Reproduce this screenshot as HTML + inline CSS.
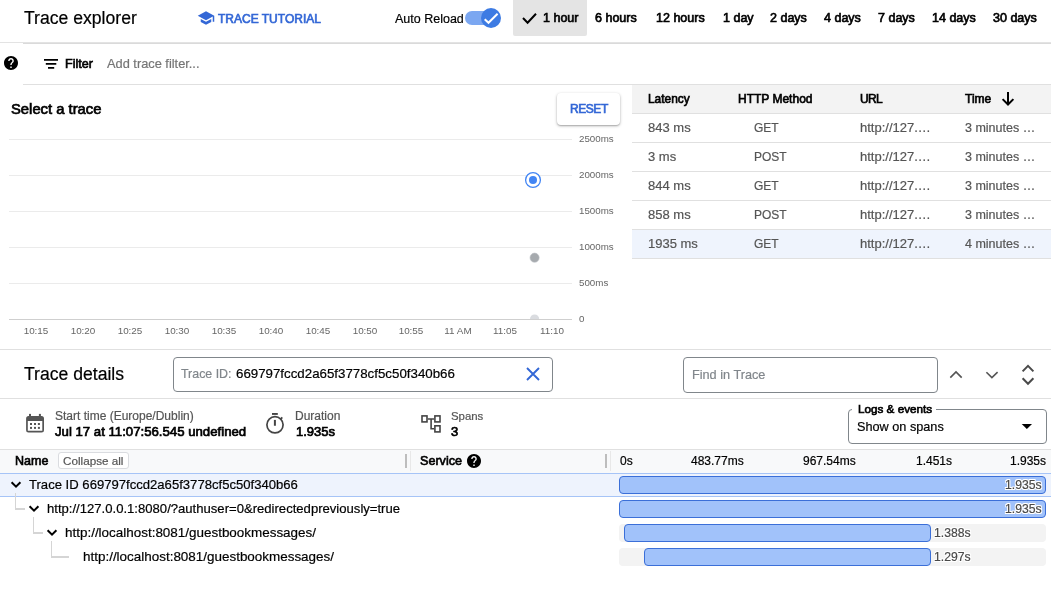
<!DOCTYPE html>
<html><head><meta charset="utf-8"><style>
html,body{margin:0;padding:0;background:#fff;width:1051px;height:611px;overflow:hidden;position:relative;font-family:"Liberation Sans", sans-serif;}
.t{position:absolute;white-space:pre;font-family:"Liberation Sans", sans-serif;will-change:transform;}
.r{position:absolute;}
</style></head><body>
<div class="t" style="left:23.60px;top:10.00px;font-size:17.6px;line-height:17.6px;color:#000;-webkit-text-stroke:0.2px #000;">Trace explorer</div>
<svg class="r" style="left:197.25px;top:8.65px" width="18" height="18" viewBox="0 0 24 24"><path fill="#3367d6" d="M5 13.18v4L12 21l7-3.82v-4L12 17l-7-3.82zM12 3L1 9l11 6 9-4.91V17h2V9L12 3z"/></svg>
<div class="t" style="left:218.00px;top:13.00px;font-size:12px;line-height:12px;color:#3367d6;-webkit-text-stroke:0.6499999999999999px #3367d6;">TRACE TUTORIAL</div>
<div class="t" style="left:394.90px;top:13.00px;font-size:12.5px;line-height:12.5px;color:#000;-webkit-text-stroke:0.2px #000;">Auto Reload</div>
<div class="r" style="left:465px;top:11px;width:33px;height:14px;border-radius:7px;background:#7ba7f1;"></div>
<svg class="r" style="left:480px;top:7px" width="22" height="22" viewBox="0 0 22 22"><circle cx="11" cy="11" r="10" fill="#3d7be3"/><path d="M4.7 12.2 L8.5 15.8 L17.6 6.75" stroke="#fff" stroke-width="2" fill="none"/></svg>
<div class="r" style="left:513px;top:0px;width:74px;height:35.5px;background:#e4e4e4;border-radius:0 0 2px 2px;"></div>
<svg class="r" style="left:520px;top:8px" width="20" height="20" viewBox="0 0 20 20"><path d="M3 10 L7.6 14.7 L16 5.7" stroke="#000" stroke-width="2" fill="none"/></svg>
<div class="t" style="left:543.00px;top:12.00px;font-size:12.5px;line-height:12.5px;color:#000;-webkit-text-stroke:0.6499999999999999px #000;">1 hour</div>
<div class="t" style="left:595.00px;top:12.00px;font-size:12.5px;line-height:12.5px;color:#000;-webkit-text-stroke:0.6499999999999999px #000;">6 hours</div>
<div class="t" style="left:655.50px;top:12.00px;font-size:12.5px;line-height:12.5px;color:#000;-webkit-text-stroke:0.6499999999999999px #000;">12 hours</div>
<div class="t" style="left:723.00px;top:12.00px;font-size:12.5px;line-height:12.5px;color:#000;-webkit-text-stroke:0.6499999999999999px #000;">1 day</div>
<div class="t" style="left:770.00px;top:12.00px;font-size:12.5px;line-height:12.5px;color:#000;-webkit-text-stroke:0.6499999999999999px #000;">2 days</div>
<div class="t" style="left:824.00px;top:12.00px;font-size:12.5px;line-height:12.5px;color:#000;-webkit-text-stroke:0.6499999999999999px #000;">4 days</div>
<div class="t" style="left:877.60px;top:12.00px;font-size:12.5px;line-height:12.5px;color:#000;-webkit-text-stroke:0.6499999999999999px #000;">7 days</div>
<div class="t" style="left:932.00px;top:12.00px;font-size:12.5px;line-height:12.5px;color:#000;-webkit-text-stroke:0.6499999999999999px #000;">14 days</div>
<div class="t" style="left:993.00px;top:12.00px;font-size:12.5px;line-height:12.5px;color:#000;-webkit-text-stroke:0.6499999999999999px #000;">30 days</div>
<div class="r" style="left:0px;top:42px;width:1051px;height:1px;background:#e3e3e3;"></div>
<div class="r" style="left:23px;top:43px;width:1028px;height:1px;background:#dadada;"></div>
<svg class="r" style="left:4px;top:56px" width="14" height="14" viewBox="2 2 20 20"><path fill="#000" d="M12 2C6.48 2 2 6.48 2 12s4.48 10 10 10 10-4.48 10-10S17.52 2 12 2zm1 17h-2v-2h2v2zm2.07-7.75l-.9.92C13.45 12.9 13 13.5 13 15h-2v-.5c0-1.1.45-2.1 1.17-2.83l1.24-1.26c.37-.36.59-.86.59-1.41 0-1.1-.9-2-2-2s-2 .9-2 2H8c0-2.21 1.79-4 4-4s4 1.79 4 4c0 .88-.36 1.68-.93 2.25z"/></svg>
<svg class="r" style="left:40px;top:55px" width="22" height="18" viewBox="0 0 22 18"><g fill="#000"><rect x="4" y="4" width="14" height="1.75"/><rect x="5.8" y="8" width="10.5" height="1.75"/><rect x="8" y="12" width="6.2" height="1.75"/></g></svg>
<div class="t" style="left:64.70px;top:58.00px;font-size:12.6px;line-height:12.6px;color:#000;-webkit-text-stroke:0.6499999999999999px #000;">Filter</div>
<div class="t" style="left:107.00px;top:58.00px;font-size:12.8px;line-height:12.8px;color:#757575;-webkit-text-stroke:0.2px #757575;">Add trace filter...</div>
<div class="r" style="left:23px;top:84px;width:1028px;height:1px;background:#e0e0e0;"></div>
<div class="t" style="left:11.40px;top:102.00px;font-size:14.8px;line-height:14.8px;color:#000;-webkit-text-stroke:0.7px #000;">Select a trace</div>
<div class="r" style="left:557px;top:93px;width:63px;height:32px;background:#fff;border-radius:4px;box-shadow:0 1px 3px rgba(0,0,0,.3),0 1px 1px rgba(0,0,0,.12);"></div>
<div class="t" style="left:570.00px;top:103.00px;font-size:12px;line-height:12px;color:#3367d6;-webkit-text-stroke:0.6499999999999999px #3367d6;letter-spacing:-0.45px;">RESET</div>
<div class="r" style="left:9px;top:139px;width:563px;height:1px;background:#ebebeb;"></div>
<div class="r" style="left:9px;top:175px;width:563px;height:1px;background:#ebebeb;"></div>
<div class="r" style="left:9px;top:211px;width:563px;height:1px;background:#ebebeb;"></div>
<div class="r" style="left:9px;top:247px;width:563px;height:1px;background:#ebebeb;"></div>
<div class="r" style="left:9px;top:283px;width:563px;height:1px;background:#ebebeb;"></div>
<div class="r" style="left:9px;top:319px;width:563px;height:1px;background:#cfcfcf;"></div>
<div class="t" style="left:579.40px;top:134.00px;font-size:9.75px;line-height:9.75px;color:#666;">2500ms</div>
<div class="t" style="left:579.40px;top:170.00px;font-size:9.75px;line-height:9.75px;color:#666;">2000ms</div>
<div class="t" style="left:579.40px;top:206.00px;font-size:9.75px;line-height:9.75px;color:#666;">1500ms</div>
<div class="t" style="left:579.40px;top:242.00px;font-size:9.75px;line-height:9.75px;color:#666;">1000ms</div>
<div class="t" style="left:579.40px;top:278.00px;font-size:9.75px;line-height:9.75px;color:#666;">500ms</div>
<div class="t" style="left:579.40px;top:314.00px;font-size:9.75px;line-height:9.75px;color:#666;">0</div>
<div class="t" style="left:6.10px;top:326.00px;font-size:9.9px;line-height:9.9px;color:#666;width:60px;text-align:center;">10:15</div>
<div class="t" style="left:53.02px;top:326.00px;font-size:9.9px;line-height:9.9px;color:#666;width:60px;text-align:center;">10:20</div>
<div class="t" style="left:99.94px;top:326.00px;font-size:9.9px;line-height:9.9px;color:#666;width:60px;text-align:center;">10:25</div>
<div class="t" style="left:146.86px;top:326.00px;font-size:9.9px;line-height:9.9px;color:#666;width:60px;text-align:center;">10:30</div>
<div class="t" style="left:193.78px;top:326.00px;font-size:9.9px;line-height:9.9px;color:#666;width:60px;text-align:center;">10:35</div>
<div class="t" style="left:240.70px;top:326.00px;font-size:9.9px;line-height:9.9px;color:#666;width:60px;text-align:center;">10:40</div>
<div class="t" style="left:287.62px;top:326.00px;font-size:9.9px;line-height:9.9px;color:#666;width:60px;text-align:center;">10:45</div>
<div class="t" style="left:334.54px;top:326.00px;font-size:9.9px;line-height:9.9px;color:#666;width:60px;text-align:center;">10:50</div>
<div class="t" style="left:381.46px;top:326.00px;font-size:9.9px;line-height:9.9px;color:#666;width:60px;text-align:center;">10:55</div>
<div class="t" style="left:428.38px;top:326.00px;font-size:9.9px;line-height:9.9px;color:#666;width:60px;text-align:center;">11 AM</div>
<div class="t" style="left:475.30px;top:326.00px;font-size:9.9px;line-height:9.9px;color:#666;width:60px;text-align:center;">11:05</div>
<div class="t" style="left:522.22px;top:326.00px;font-size:9.9px;line-height:9.9px;color:#666;width:60px;text-align:center;">11:10</div>
<svg class="r" style="left:523px;top:169.6px" width="20" height="20" viewBox="0 0 20 20"><circle cx="10" cy="10" r="7.4" fill="#fff" stroke="#4285f4" stroke-width="1.3"/><circle cx="10" cy="10" r="4" fill="#4285f4"/></svg>
<svg class="r" style="left:529px;top:252px" width="12" height="12" viewBox="0 0 12 12"><circle cx="5.6" cy="5.7" r="4.6" fill="#a6aaae" stroke="#bdc1c6" stroke-width="0.6"/></svg>
<svg class="r" style="left:529px;top:313px" width="12" height="6" viewBox="0 0 12 6"><circle cx="5.6" cy="6" r="4.6" fill="#dadce0"/></svg>
<div class="r" style="left:0px;top:349px;width:1051px;height:1px;background:#e0e0e0;"></div>
<div class="r" style="left:632px;top:85px;width:419px;height:28px;background:#f3f3f3;"></div>
<div class="r" style="left:632px;top:113px;width:419px;height:1px;background:#e0e0e0;"></div>
<div class="r" style="left:632px;top:142px;width:419px;height:1px;background:#e0e0e0;"></div>
<div class="r" style="left:632px;top:171px;width:419px;height:1px;background:#e0e0e0;"></div>
<div class="r" style="left:632px;top:200px;width:419px;height:1px;background:#e0e0e0;"></div>
<div class="r" style="left:632px;top:229px;width:419px;height:1px;background:#e0e0e0;"></div>
<div class="r" style="left:632px;top:258px;width:419px;height:1px;background:#e0e0e0;"></div>
<div class="r" style="left:632px;top:230px;width:419px;height:28px;background:#eff4fd;"></div>
<div class="t" style="left:648.00px;top:94.00px;font-size:11.9px;line-height:11.9px;color:#000;-webkit-text-stroke:0.6499999999999999px #000;">Latency</div>
<div class="t" style="left:737.60px;top:93.00px;font-size:12px;line-height:12px;color:#000;-webkit-text-stroke:0.6499999999999999px #000;">HTTP Method</div>
<div class="t" style="left:859.50px;top:93.00px;font-size:12px;line-height:12px;color:#000;-webkit-text-stroke:0.6499999999999999px #000;letter-spacing:-0.7px;">URL</div>
<div class="t" style="left:965.00px;top:93.00px;font-size:12px;line-height:12px;color:#000;-webkit-text-stroke:0.6499999999999999px #000;">Time</div>
<svg class="r" style="left:999px;top:88px" width="18" height="20" viewBox="0 0 18 20"><path d="M9 4 V16 M3.6 11.1 L9 16.5 L14.4 11.1" stroke="#000" stroke-width="2" fill="none"/></svg>
<div class="t" style="left:648.00px;top:121.00px;font-size:13px;line-height:13px;color:#555;-webkit-text-stroke:0.2px #555;">843 ms</div>
<div class="t" style="left:754.00px;top:122.00px;font-size:12px;line-height:12px;color:#555;-webkit-text-stroke:0.2px #555;">GET</div>
<div class="t" style="left:859.50px;top:121.00px;font-size:13px;line-height:13px;color:#555;-webkit-text-stroke:0.2px #555;">http://127.…</div>
<div class="t" style="left:965.00px;top:122.00px;font-size:12.5px;line-height:12.5px;color:#555;-webkit-text-stroke:0.2px #555;">3 minutes …</div>
<div class="t" style="left:648.00px;top:150.00px;font-size:13px;line-height:13px;color:#555;-webkit-text-stroke:0.2px #555;">3 ms</div>
<div class="t" style="left:754.00px;top:151.00px;font-size:12px;line-height:12px;color:#555;-webkit-text-stroke:0.2px #555;">POST</div>
<div class="t" style="left:859.50px;top:150.00px;font-size:13px;line-height:13px;color:#555;-webkit-text-stroke:0.2px #555;">http://127.…</div>
<div class="t" style="left:965.00px;top:151.00px;font-size:12.5px;line-height:12.5px;color:#555;-webkit-text-stroke:0.2px #555;">3 minutes …</div>
<div class="t" style="left:648.00px;top:179.00px;font-size:13px;line-height:13px;color:#555;-webkit-text-stroke:0.2px #555;">844 ms</div>
<div class="t" style="left:754.00px;top:180.00px;font-size:12px;line-height:12px;color:#555;-webkit-text-stroke:0.2px #555;">GET</div>
<div class="t" style="left:859.50px;top:179.00px;font-size:13px;line-height:13px;color:#555;-webkit-text-stroke:0.2px #555;">http://127.…</div>
<div class="t" style="left:965.00px;top:180.00px;font-size:12.5px;line-height:12.5px;color:#555;-webkit-text-stroke:0.2px #555;">3 minutes …</div>
<div class="t" style="left:648.00px;top:208.00px;font-size:13px;line-height:13px;color:#555;-webkit-text-stroke:0.2px #555;">858 ms</div>
<div class="t" style="left:754.00px;top:209.00px;font-size:12px;line-height:12px;color:#555;-webkit-text-stroke:0.2px #555;">POST</div>
<div class="t" style="left:859.50px;top:208.00px;font-size:13px;line-height:13px;color:#555;-webkit-text-stroke:0.2px #555;">http://127.…</div>
<div class="t" style="left:965.00px;top:209.00px;font-size:12.5px;line-height:12.5px;color:#555;-webkit-text-stroke:0.2px #555;">3 minutes …</div>
<div class="t" style="left:648.00px;top:237.00px;font-size:13px;line-height:13px;color:#555;-webkit-text-stroke:0.2px #555;">1935 ms</div>
<div class="t" style="left:754.00px;top:238.00px;font-size:12px;line-height:12px;color:#555;-webkit-text-stroke:0.2px #555;">GET</div>
<div class="t" style="left:859.50px;top:237.00px;font-size:13px;line-height:13px;color:#555;-webkit-text-stroke:0.2px #555;">http://127.…</div>
<div class="t" style="left:965.00px;top:238.00px;font-size:12.5px;line-height:12.5px;color:#555;-webkit-text-stroke:0.2px #555;">4 minutes …</div>
<div class="t" style="left:24.00px;top:366.00px;font-size:17.6px;line-height:17.6px;color:#000;-webkit-text-stroke:0.2px #000;">Trace details</div>
<div class="r" style="left:173px;top:356.5px;width:380px;height:35px;border:1px solid #80868b;border-radius:4px;box-sizing:border-box;"></div>
<div class="t" style="left:181.00px;top:368.00px;font-size:12.4px;line-height:12.4px;color:#80868b;-webkit-text-stroke:0.2px #80868b;">Trace ID:</div>
<div class="t" style="left:235.70px;top:367.00px;font-size:13.3px;line-height:13.3px;color:#000;-webkit-text-stroke:0.2px #000;">669797fccd2a65f3778cf5c50f340b66</div>
<svg class="r" style="left:525px;top:366px" width="16" height="16" viewBox="0 0 16 16"><path d="M2 2 L14 14 M14 2 L2 14" stroke="#3367d6" stroke-width="1.9"/></svg>
<div class="r" style="left:683px;top:357px;width:255px;height:35.5px;border:1px solid #80868b;border-radius:4px;box-sizing:border-box;"></div>
<div class="t" style="left:691.70px;top:369.00px;font-size:12.7px;line-height:12.7px;color:#80868b;-webkit-text-stroke:0.2px #80868b;">Find in Trace</div>
<svg class="r" style="left:946px;top:366px" width="20" height="16" viewBox="0 0 20 16"><path d="M4.3 11.6 L10 5.9 L15.7 11.6" stroke="#555" stroke-width="1.6" fill="none"/></svg>
<svg class="r" style="left:982px;top:366px" width="20" height="16" viewBox="0 0 20 16"><path d="M4.4 6.2 L9.9 11.6 L15.6 6.2" stroke="#555" stroke-width="1.6" fill="none"/></svg>
<svg class="r" style="left:1018px;top:362px" width="20" height="26" viewBox="0 0 20 26"><path d="M4.6 9.4 L10 3.9 L15.4 9.4 M4.6 16.3 L10 21.8 L15.4 16.3" stroke="#4a4a4a" stroke-width="2" fill="none"/></svg>
<div class="r" style="left:0px;top:398px;width:1051px;height:1px;background:#e0e0e0;"></div>
<svg class="r" style="left:20px;top:408px" width="30" height="30" viewBox="0 0 30 30"><g fill="#555"><path fill-rule="evenodd" d="M8.6 7.9 H21.5 A2.5 2.5 0 0 1 24 10.4 V22 A2.5 2.5 0 0 1 21.5 24.5 H8.6 A2.5 2.5 0 0 1 6.1 22 V10.4 A2.5 2.5 0 0 1 8.6 7.9 Z M7.8 13 V22.8 H22.3 V13 Z"/><rect x="9" y="5.9" width="2" height="2.5"/><rect x="18.9" y="5.9" width="2" height="2.5"/><rect x="10" y="15" width="2" height="2"/><rect x="14" y="15" width="2" height="2"/><rect x="17.9" y="15" width="2" height="2"/><rect x="10" y="18.9" width="2" height="2"/><rect x="14" y="18.9" width="2" height="2"/><rect x="17.9" y="18.9" width="2" height="2"/></g></svg>
<div class="t" style="left:55.40px;top:410.00px;font-size:12px;line-height:12px;color:#555;-webkit-text-stroke:0.2px #555;">Start time (Europe/Dublin)</div>
<div class="t" style="left:55.40px;top:425.00px;font-size:13.2px;line-height:13.2px;color:#000;-webkit-text-stroke:0.7px #000;">Jul 17 at 11:07:56.545 undefined</div>
<svg class="r" style="left:260px;top:406px" width="30" height="34" viewBox="0 0 30 34"><g fill="#444"><rect x="12" y="7" width="5.8" height="1.9"/><rect x="13.9" y="13.9" width="2" height="5.85"/></g><circle cx="15" cy="18.8" r="8.1" fill="none" stroke="#444" stroke-width="1.7"/><path d="M20.3 13.3 L22.3 11.3" stroke="#444" stroke-width="1.8"/></svg>
<div class="t" style="left:295.00px;top:410.00px;font-size:12px;line-height:12px;color:#555;-webkit-text-stroke:0.2px #555;">Duration</div>
<div class="t" style="left:295.70px;top:425.00px;font-size:13px;line-height:13px;color:#000;-webkit-text-stroke:0.7px #000;">1.935s</div>
<svg class="r" style="left:415px;top:408px" width="32" height="32" viewBox="0 0 32 32"><g fill="none" stroke="#444" stroke-width="1.6"><rect x="7" y="7.9" width="5" height="6"/><rect x="19.9" y="7.9" width="5.1" height="6"/><rect x="19.9" y="17.8" width="5.1" height="6.1"/><path d="M12.8 11 H19.1 M16.1 11 V20.7 H19.1"/></g></svg>
<div class="t" style="left:450.50px;top:411.00px;font-size:11.4px;line-height:11.4px;color:#555;-webkit-text-stroke:0.2px #555;">Spans</div>
<div class="t" style="left:450.80px;top:425.00px;font-size:13px;line-height:13px;color:#000;-webkit-text-stroke:0.7px #000;">3</div>
<div class="r" style="left:847.6px;top:409.3px;width:199.2px;height:35.2px;border:1px solid #80868b;border-radius:4px;box-sizing:border-box;"></div>
<div class="r" style="left:852.4px;top:405px;width:83.6px;height:8px;background:#fff;"></div>
<div class="t" style="left:857.70px;top:403.00px;font-size:11.7px;line-height:11.7px;color:#000;-webkit-text-stroke:0.6499999999999999px #000;">Logs &amp; events</div>
<div class="t" style="left:857.00px;top:421.00px;font-size:12.7px;line-height:12.7px;color:#000;-webkit-text-stroke:0.2px #000;">Show on spans</div>
<svg class="r" style="left:1020px;top:422px" width="14" height="9" viewBox="0 0 14 9"><path d="M1.7 2 L12 2 L6.85 7 Z" fill="#000"/></svg>
<div class="r" style="left:0px;top:449px;width:1051px;height:1px;background:#e0e0e0;"></div>
<div class="r" style="left:0px;top:450px;width:1051px;height:23px;background:#f8f9fa;"></div>
<div class="r" style="left:0px;top:473px;width:1051px;height:1px;background:#a6c4f7;"></div>
<div class="t" style="left:15.20px;top:455.00px;font-size:12.5px;line-height:12.5px;color:#000;-webkit-text-stroke:0.6499999999999999px #000;">Name</div>
<div class="r" style="left:58.3px;top:452.3px;width:70.3px;height:17.1px;border:1px solid #dadce0;border-radius:3px;box-sizing:border-box;background:#fff;"></div>
<div class="t" style="left:62.80px;top:455.00px;font-size:11.7px;line-height:11.7px;color:#555;-webkit-text-stroke:0.2px #555;">Collapse all</div>
<div class="r" style="left:405px;top:454px;width:2px;height:14px;background:#bdbdbd;"></div>
<div class="r" style="left:410px;top:451px;width:1px;height:20px;background:#e8e8e8;"></div>
<div class="t" style="left:419.50px;top:455.00px;font-size:12.6px;line-height:12.6px;color:#000;-webkit-text-stroke:0.6499999999999999px #000;">Service</div>
<svg class="r" style="left:467px;top:454px" width="14" height="14" viewBox="2 2 20 20"><path fill="#000" d="M12 2C6.48 2 2 6.48 2 12s4.48 10 10 10 10-4.48 10-10S17.52 2 12 2zm1 17h-2v-2h2v2zm2.07-7.75l-.9.92C13.45 12.9 13 13.5 13 15h-2v-.5c0-1.1.45-2.1 1.17-2.83l1.24-1.26c.37-.36.59-.86.59-1.41 0-1.1-.9-2-2-2s-2 .9-2 2H8c0-2.21 1.79-4 4-4s4 1.79 4 4c0 .88-.36 1.68-.93 2.25z"/></svg>
<div class="r" style="left:605px;top:454px;width:2px;height:14px;background:#bdbdbd;"></div>
<div class="r" style="left:610px;top:451px;width:1px;height:20px;background:#e8e8e8;"></div>
<div class="t" style="left:619.50px;top:455.00px;font-size:12px;line-height:12px;color:#000;-webkit-text-stroke:0.2px #000;">0s</div>
<div class="t" style="left:691.00px;top:455.00px;font-size:12px;line-height:12px;color:#000;-webkit-text-stroke:0.2px #000;">483.77ms</div>
<div class="t" style="left:803.00px;top:455.00px;font-size:12px;line-height:12px;color:#000;-webkit-text-stroke:0.2px #000;">967.54ms</div>
<div class="t" style="left:915.60px;top:455.00px;font-size:12px;line-height:12px;color:#000;-webkit-text-stroke:0.2px #000;">1.451s</div>
<div class="t" style="left:1010.00px;top:455.00px;font-size:12px;line-height:12px;color:#000;-webkit-text-stroke:0.2px #000;">1.935s</div>
<div class="r" style="left:0px;top:474px;width:1051px;height:22px;background:#eef3fd;"></div>
<div class="r" style="left:0px;top:496px;width:1051px;height:1px;background:#a6c4f7;"></div>
<div class="t" style="left:28.70px;top:478.00px;font-size:13.1px;line-height:13.1px;color:#000;-webkit-text-stroke:0.2px #000;">Trace ID 669797fccd2a65f3778cf5c50f340b66</div>
<div class="t" style="left:46.80px;top:502.00px;font-size:13.1px;line-height:13.1px;color:#000;-webkit-text-stroke:0.2px #000;">http://127.0.0.1:8080/?authuser=0&amp;redirectedpreviously=true</div>
<div class="t" style="left:64.80px;top:526.00px;font-size:13.45px;line-height:13.45px;color:#000;-webkit-text-stroke:0.2px #000;">http://localhost:8081/guestbookmessages/</div>
<div class="t" style="left:82.90px;top:550.00px;font-size:13.45px;line-height:13.45px;color:#000;-webkit-text-stroke:0.2px #000;">http://localhost:8081/guestbookmessages/</div>
<svg class="r" style="left:9.100000000000001px;top:477.5px" width="14" height="14" viewBox="0 0 14 14"><path d="M2.6 4.3 L7 8.7 L11.4 4.3" stroke="#000" stroke-width="2" fill="none"/></svg>
<svg class="r" style="left:27.1px;top:501.5px" width="14" height="14" viewBox="0 0 14 14"><path d="M2.6 4.3 L7 8.7 L11.4 4.3" stroke="#000" stroke-width="2" fill="none"/></svg>
<svg class="r" style="left:45.1px;top:525.5px" width="14" height="14" viewBox="0 0 14 14"><path d="M2.6 4.3 L7 8.7 L11.4 4.3" stroke="#000" stroke-width="2" fill="none"/></svg>
<div class="r" style="left:14.85px;top:493px;width:1.5px;height:16px;background:#d5d5d5;"></div>
<div class="r" style="left:14.85px;top:508.25px;width:9.85px;height:1.5px;background:#d5d5d5;"></div>
<div class="r" style="left:32.85px;top:516.6px;width:1.5px;height:16.4px;background:#d5d5d5;"></div>
<div class="r" style="left:32.85px;top:532.25px;width:9.95px;height:1.5px;background:#d5d5d5;"></div>
<div class="r" style="left:50.85px;top:541px;width:1.5px;height:16px;background:#d5d5d5;"></div>
<div class="r" style="left:50.85px;top:556.25px;width:18.65px;height:1.5px;background:#d5d5d5;"></div>
<div class="r" style="left:619.2px;top:476px;width:426.4px;height:17.5px;background:#a1c2fa;border:1.3px solid #3b6fd8;border-radius:4px;box-sizing:border-box;"></div>
<div class="r" style="left:619.2px;top:500px;width:426.4px;height:17.5px;background:#a1c2fa;border:1.3px solid #3b6fd8;border-radius:4px;box-sizing:border-box;"></div>
<div class="r" style="left:619.2px;top:524px;width:426.4px;height:17.5px;background:#f3f3f3;border-radius:4px;"></div>
<div class="r" style="left:624px;top:524px;width:306.8px;height:17.5px;background:#a1c2fa;border:1.3px solid #3b6fd8;border-radius:4px;box-sizing:border-box;"></div>
<div class="r" style="left:619.2px;top:548px;width:426.4px;height:17.5px;background:#f3f3f3;border-radius:4px;"></div>
<div class="r" style="left:644px;top:548px;width:286.8px;height:17.5px;background:#a1c2fa;border:1.3px solid #3b6fd8;border-radius:4px;box-sizing:border-box;"></div>
<div class="t" style="left:1005.00px;top:479.00px;font-size:12.2px;line-height:12.2px;color:#4a4a4a;-webkit-text-stroke:0.2px #4a4a4a;text-shadow:1px 0 0 #fff,-1px 0 0 #fff,0 1px 0 #fff,0 -1px 0 #fff,1px 1px 0 #fff,-1px -1px 0 #fff,1px -1px 0 #fff,-1px 1px 0 #fff;">1.935s</div>
<div class="t" style="left:1005.00px;top:503.00px;font-size:12.2px;line-height:12.2px;color:#4a4a4a;-webkit-text-stroke:0.2px #4a4a4a;text-shadow:1px 0 0 #fff,-1px 0 0 #fff,0 1px 0 #fff,0 -1px 0 #fff,1px 1px 0 #fff,-1px -1px 0 #fff,1px -1px 0 #fff,-1px 1px 0 #fff;">1.935s</div>
<div class="t" style="left:934.30px;top:527.00px;font-size:12.2px;line-height:12.2px;color:#4a4a4a;-webkit-text-stroke:0.2px #4a4a4a;text-shadow:1px 0 0 #fff,-1px 0 0 #fff,0 1px 0 #fff,0 -1px 0 #fff,1px 1px 0 #fff,-1px -1px 0 #fff,1px -1px 0 #fff,-1px 1px 0 #fff;">1.388s</div>
<div class="t" style="left:934.30px;top:551.00px;font-size:12.2px;line-height:12.2px;color:#4a4a4a;-webkit-text-stroke:0.2px #4a4a4a;text-shadow:1px 0 0 #fff,-1px 0 0 #fff,0 1px 0 #fff,0 -1px 0 #fff,1px 1px 0 #fff,-1px -1px 0 #fff,1px -1px 0 #fff,-1px 1px 0 #fff;">1.297s</div>
</body></html>
